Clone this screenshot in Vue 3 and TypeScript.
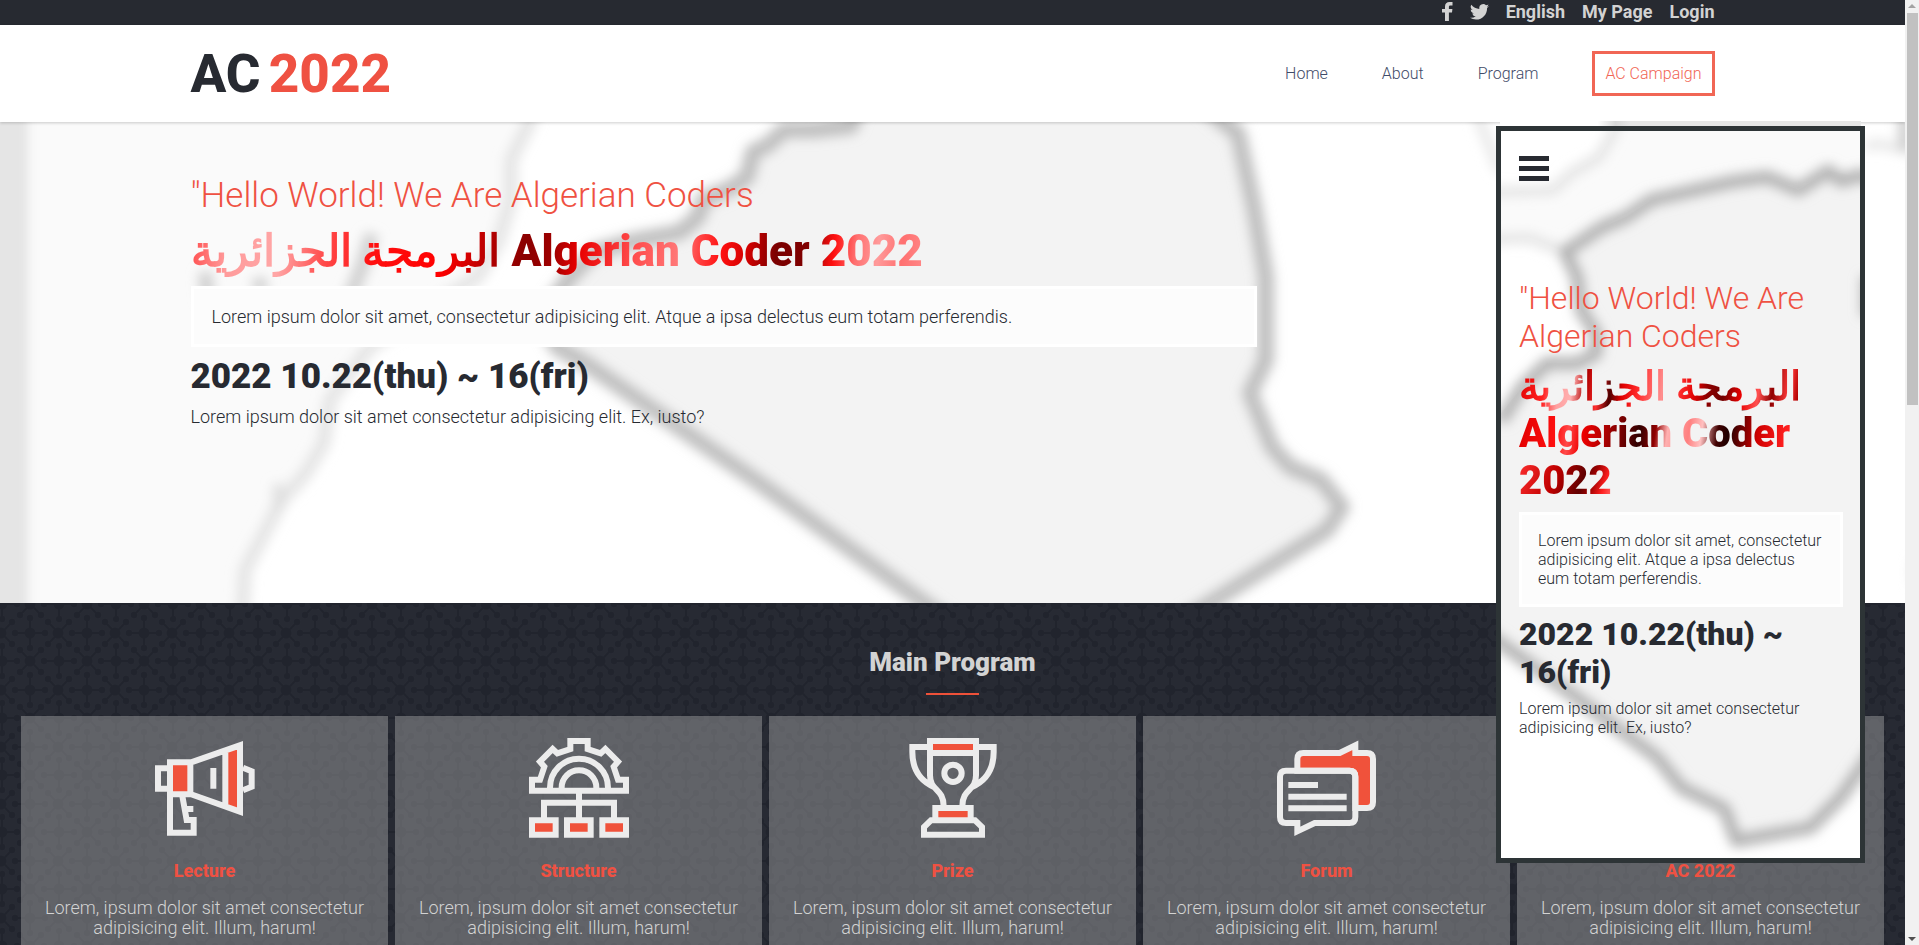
<script setup lang="ts">
interface Program {
  icon: string
  title: string
}

const account: string[] = ['English', 'My Page', 'Login']
const menu: string[] = ['Home', 'About', 'Program']
const programs: Program[] = [
  { icon: 'lecture', title: 'Lecture' },
  { icon: 'structure', title: 'Structure' },
  { icon: 'prize', title: 'Prize' },
  { icon: 'forum', title: 'Forum' },
  { icon: 'none', title: 'AC 2022' },
]
</script>

<template>
  <div class="window">
    <div class="page">
      <div class="topbar">
        <a href="#" aria-label="Facebook">
          <svg class="facebook" viewBox="0 0 11 19"><path d="M3 19V10.500H0V7H3V4.500C3 1.500 4.700 0 7.500 0H10.500V3.400H8.500C7.200 3.400 6.900 4 6.900 5V7H10.400L10 10.500H6.900V19Z" /></svg>
        </a>
        <a href="#" aria-label="Twitter">
          <svg class="twitter" viewBox="0 0 24 20"><path d="M24 2.370a9.600 9.600 0 0 1-2.830.780A4.960 4.960 0 0 0 23.340.400a9.900 9.900 0 0 1-3.130 1.200 4.920 4.920 0 0 0-8.380 4.490A13.960 13.960 0 0 1 1.670.930a4.930 4.930 0 0 0 1.520 6.570 4.900 4.900 0 0 1-2.230-.610 4.930 4.930 0 0 0 3.950 4.880 4.900 4.900 0 0 1-2.220.090 4.930 4.930 0 0 0 4.600 3.420A9.870 9.870 0 0 1 0 17.320a13.940 13.940 0 0 0 7.550 2.210c9.140 0 14.300-7.720 14-14.650A10 10 0 0 0 24 2.370Z" /></svg>
        </a>
        <a v-for="item in account" :key="item" href="#">{{ item }}</a>
      </div>

      <header class="header">
        <a class="logo" href="#">AC <span>2022</span></a>
        <nav class="menu">
          <a v-for="item in menu" :key="item" href="#">{{ item }}</a>
          <a class="campaign" href="#">AC Campaign</a>
        </nav>
      </header>

      <main>
        <section class="hero">
          <svg class="map" viewBox="0 0 1905 481" preserveAspectRatio="xMinYMin slice" aria-hidden="true">
            <defs>
              <filter id="soft" x="-10%" y="-10%" width="120%" height="120%"><feGaussianBlur stdDeviation="6" /></filter>
              <filter id="edge" x="-100%" y="-10%" width="300%" height="120%"><feGaussianBlur stdDeviation="5" /></filter>
            </defs>
            <path fill="#fafafa" d="M0 0H530L511 38 511 78 499 118 478 155 370 225 330 278 324 321 306 351 282 378 245 448 242 481H0Z" />
            <path fill="#f3f3f3" d="M851 0L784 8 768 23 753 30 747 55 729 67 704 77 698 95 680 110 637 118 594 130 570 155 540 195 557 225 588 243 755 358 925 481H1205L1327 408 1342 385 1321 358 1290 345 1272 325 1250 271 1266 238 1266 155 1254 85 1238 11 1223 0Z" />
            <g fill="none" filter="url(#soft)" stroke-linejoin="round">
              <path stroke="#e4e4e4" stroke-width="13" d="M532-20L530 0 511 38 511 78 499 118 478 155 370 225 330 278 324 321 306 351 282 378 245 448 242 500" />
              <path stroke="#d0d0d0" stroke-width="14" d="M372 112L362 145 348 180M205 150L208 180M258 156L262 170" />
              <path stroke="#dedede" stroke-width="10" d="M278 362L278 388" />
              <path stroke="#bfbfbf" stroke-width="16" d="M860-20L851 4 814 8 784 8 768 23 753 30 747 55 729 67 704 77 698 95 680 110 637 118 594 130 570 155 540 195 557 225 588 243 755 358 950 500M1200-20L1223 0 1238 11 1254 85 1266 155 1266 238 1250 271 1272 325 1290 345 1321 358 1342 385 1327 408 1180 500" />
              <path stroke="#e8e8e8" stroke-width="10" d="M1474-20L1480 0 1488 20 1500 50M1865 24L1880 22 1915 30M1915 438V462" />
              <path stroke="#d0d0d0" stroke-width="14" d="M1905-10V28" />
            </g>
            <path fill="#e5e5e5" filter="url(#edge)" d="M-20-20H28V520H-20Z" />
          </svg>
          <div class="intro">
            <p class="hello">"Hello World! We Are Algerian Coders</p>
            <h1 class="headline">البرمجة الجزائرية Algerian Coder 2022</h1>
            <p class="note">Lorem ipsum dolor sit amet, consectetur adipisicing elit. Atque a ipsa delectus eum totam perferendis.</p>
            <h2 class="date">2022 10.22(thu) ~ 16(fri)</h2>
            <p class="place">Lorem ipsum dolor sit amet consectetur adipisicing elit. Ex, iusto?</p>
          </div>
        </section>

        <section class="programs">
          <svg class="pattern" aria-hidden="true">
            <defs>
              <pattern id="nodes" x="1" y="1" width="57" height="57" patternUnits="userSpaceOnUse">
                <g fill="#21242d" stroke="#21242d" stroke-width="2">
                  <g id="plus">
                    <path d="M14 29H44M29 14V44" />
                    <circle cx="29" cy="29" r="4.500" /><circle cx="14" cy="29" r="2.200" /><circle cx="44" cy="29" r="2.200" /><circle cx="29" cy="14" r="2.200" /><circle cx="29" cy="44" r="2.200" />
                  </g>
                  <use href="#plus" x="-28" y="28" /><use href="#plus" x="29" y="28" /><use href="#plus" x="-28" y="-29" /><use href="#plus" x="29" y="-29" />
                  <g id="cross">
                    <path d="M-10 18L11 40M11 18L-10 40" />
                    <circle cx="0" cy="29" r="4.500" /><circle cx="-10" cy="18" r="2.200" /><circle cx="11" cy="18" r="2.200" /><circle cx="-10" cy="40" r="2.200" /><circle cx="11" cy="40" r="2.200" />
                  </g>
                  <use href="#cross" x="57" /><use href="#cross" x="29" y="28" /><use href="#cross" x="29" y="-29" />
                </g>
              </pattern>
            </defs>
            <rect width="100%" height="100%" fill="url(#nodes)" />
          </svg>
          <h2 class="title">Main Program</h2>
          <div class="cards">
            <article v-for="item in programs" :key="item.title" class="card">
              <svg class="icon" viewBox="0 0 300 300" aria-hidden="true">
                <template v-if="item.icon === 'lecture'">
                  <path class="red" d="M45 73H106V169H45ZM211 37L255 22V220L211 205Z" />
                  <path d="M45 91H9V152H45M45 73H106V169H45ZM106 74L255 22V221L106 168M211 38V204M175 90V152M264 89L290 100V146L264 157M45 169V284H116V246H95L82 174M90 213H115" />
                </template>
                <template v-else-if="item.icon === 'structure'">
                  <path class="red" d="M9 247H80V290H9ZM114 247H185V290H114ZM220 247H291V290H220Z" />
                  <path d="M9 158V125H33L46 86 33 71 71 33 85 46 124 33V9H176V33L215 46 229 33 267 71 254 86 267 125H291V158ZM63 158V149A87 87 0 0 1 237 149V158M98 158V149A52 52 0 0 1 202 149V158M150 158V247M45 247V194H255V247M9 247H80V290H9ZM114 247H185V290H114ZM220 247H291V290H220Z" />
                </template>
                <template v-else-if="item.icon === 'prize'">
                  <path class="red" d="M81 9H219V45H81ZM97 210H203V247H97Z" />
                  <path d="M81 9H219V45H81ZM81 27H28V42C28 95 52 130 97 149M219 27H272V42C272 95 248 130 203 149M81 45V112C81 160 122 150 122 205M219 45V112C219 160 178 150 178 205M97 210H203V247H97ZM63 290V267L84 247H216L237 267V290Z" />
                  <circle cx="150" cy="106" r="26" />
                </template>
                <template v-else-if="item.icon === 'forum'">
                  <path class="red back" d="M61 98V63Q61 45 79 45H188L235 22V45H270Q288 45 288 63V192Q288 210 270 210H235V116Q235 98 217 98Z" />
                  <path d="M27 98H217Q235 98 235 116V237Q235 255 217 255H113L61 280V255H27Q9 255 9 237V116Q9 98 27 98ZM34 141H123M34 176H209M34 211H209" />
                </template>
              </svg>
              <h3>{{ item.title }}</h3>
              <p>Lorem, ipsum dolor sit amet consectetur adipisicing elit. Illum, harum!</p>
            </article>
          </div>
        </section>
      </main>

      <aside class="phone">
        <svg class="map" viewBox="0 0 359 726" preserveAspectRatio="xMinYMin slice" aria-hidden="true">
          <path fill="#fafafa" d="M113 0L98 26 70 42 52 59 0 61V109L28 106 64 121 101 96 150 69 359 46V0Z" />
          <path fill="#f3f3f3" d="M359 46L327 40 297 59 266 46 229 51 180 62 150 69 125 86 101 96 64 121 76 146 80 179 95 202 95 222 76 232 46 232 21 256 0 282V512L70 562 156 626 180 656 223 677 235 709 309 696 339 666 359 640Z" />
          <g fill="none" filter="url(#soft)" stroke-linejoin="round">
            <path stroke="#e4e4e4" stroke-width="10" d="M118-15L113 0 98 26 70 42 52 59-20 61M-20 109L28 107 64 121" />
            <path stroke="#b4b4b4" stroke-width="13" d="M375 48L359 44 340 50 327 40 297 59 266 46 229 51 180 62 150 69 125 86 101 96 64 121 76 146 80 179 95 202 95 222 76 232 46 232 21 256 0 290M-20 498L0 512 70 562 156 626 180 656 223 677 235 709 309 696 339 666 375 615M366 145V185" />
          </g>
        </svg>
        <div class="screen">
          <button class="burger" type="button" aria-label="Menu"><i></i><i></i><i></i></button>
          <p class="hello">"Hello World! We Are Algerian Coders</p>
          <h2 class="headline">البرمجة الجزائرية Algerian Coder 2022</h2>
          <p class="note">Lorem ipsum dolor sit amet, consectetur adipisicing elit. Atque a ipsa delectus eum totam perferendis.</p>
          <h2 class="date">2022 10.22(thu) ~ 16(fri)</h2>
          <p class="place">Lorem ipsum dolor sit amet consectetur adipisicing elit. Ex, iusto?</p>
        </div>
      </aside>
    </div>

    <div class="scroll" aria-hidden="true">
      <svg viewBox="0 0 14 13"><path fill="#a3a3a3" d="M3 8L7 4 11 8Z" /></svg>
      <div class="thumb"></div>
      <svg viewBox="0 0 14 13"><path fill="#505050" d="M3 5L7 9 11 5Z" /></svg>
    </div>
  </div>
</template>

<style>
body {
  margin: 0;
  overflow: hidden;
}
</style>

<style scoped>
.window {
  display: flex;
  height: 100vh;
  overflow: hidden;
  font-family: Roboto, sans-serif;
  font-weight: 300;
  color: #272a31;
}
.window * {
  box-sizing: border-box;
}
a {
  color: inherit;
  text-decoration: none;
}
p,
h1,
h2,
h3 {
  margin: 0;
}
.page {
  position: relative;
  flex: 1;
  min-width: 0;
  display: flex;
  flex-direction: column;
  overflow: hidden;
}
.topbar {
  display: flex;
  flex-shrink: 0;
  justify-content: flex-end;
  align-items: center;
  gap: 17px;
  height: 25px;
  padding: 0 10% 2px;
  background: #272a31;
  color: #d3d3d3;
  font-size: 18px;
  line-height: 21px;
  font-weight: 700;
}
.topbar svg {
  display: block;
  fill: #d3d3d3;
}
.facebook {
  width: 11px;
  height: 19px;
}
.twitter {
  width: 19px;
  height: 16px;
}
.header {
  position: relative;
  z-index: 1;
  display: flex;
  flex-shrink: 0;
  justify-content: space-between;
  align-items: center;
  height: 97px;
  padding: 0 10%;
  background: #fff;
  box-shadow: 0 1px 3px rgba(0, 0, 0, 0.2);
}
.logo {
  font-size: 53px;
  line-height: 62px;
  font-weight: 800;
}
.logo span {
  margin-left: -5px;
  color: #ef5142;
}
.menu {
  display: flex;
  align-items: center;
  gap: 54px;
  font-size: 16px;
  line-height: 19px;
  color: #3f4b68;
}
.campaign {
  padding: 10px;
  border: 3px solid #f16655;
  color: #f16655;
}
.hero {
  position: relative;
  height: 481px;
  padding: 53px 10% 0;
  background: #fff;
  overflow: hidden;
}
.map {
  position: absolute;
  top: 0;
  left: 0;
  width: 100%;
  height: 100%;
}
.intro {
  position: relative;
  display: flex;
  flex-direction: column;
  align-items: flex-start;
  gap: 9px;
}
.hello {
  font-size: 35px;
  line-height: 41px;
  color: #ef5142;
}
.headline {
  font-size: 44px;
  line-height: 52px;
  font-weight: 900;
  color: transparent;
  -webkit-background-clip: text;
  background-clip: text;
  background-image: linear-gradient(96deg, #ff4a4a, #ff9b9b 38px, #ffa6a6 90px, #ff4a4a 136px, #ff1010 184px, #ff0000 252px, #b00000 302px, #8a0000 335px, #a00000 364px, #e80000 388px, #ff4a4a 441px, #ff7a7a 490px, #ff4040 509px, #ff1010 530px, #d00000 557px, #7a0000 585px, #800000 615px, #ff1010 642px, #ff7070 664px, #ff9a9a 686px, #ff7070 710px, #ff8a8a 735px);
}
.note {
  width: 70%;
  padding: 17px 18px;
  border: 3px solid #fff;
  background: #fcfcfc;
  font-size: 18px;
  line-height: 21px;
}
.date {
  font-size: 35px;
  line-height: 41px;
  font-weight: 900;
}
.place {
  font-size: 18px;
  line-height: 21px;
}
.programs {
  position: relative;
  padding: 44px 21px 22px;
  background: #272a33;
}
.pattern {
  position: absolute;
  top: 0;
  left: 0;
  width: 100%;
  height: 100%;
}
.title {
  position: relative;
  display: flex;
  flex-direction: column;
  align-items: center;
  gap: 15px;
  font-size: 26px;
  line-height: 31px;
  font-weight: 900;
  color: #d3d3d3;
}
.title::after {
  content: "";
  width: 53px;
  height: 2px;
  background: #ef5139;
}
.cards {
  position: relative;
  display: grid;
  grid-template-columns: repeat(5, 1fr);
  gap: 7px;
  margin-top: 21px;
}
.card {
  display: flex;
  flex-direction: column;
  align-items: center;
  padding: 22px 22px 32px;
  background: rgba(156, 156, 158, 0.5);
  text-align: center;
}
.icon {
  width: 100px;
  height: 100px;
  fill: none;
  stroke: #ececec;
  stroke-width: 18;
}
.icon .red {
  fill: #f0523b;
  stroke: none;
}
.icon .back {
  stroke: #ececec;
}
.card h3 {
  margin: 22px 0 17px;
  font-size: 18px;
  line-height: 21px;
  font-weight: 800;
  color: #ef5142;
}
.card p {
  font-size: 18px;
  line-height: 20px;
  color: #d3d3d3;
}
.phone {
  position: absolute;
  z-index: 2;
  top: 126px;
  right: 40px;
  width: 369px;
  border: 5px solid #2d3436;
  background: #fff;
}
.phone::before {
  content: "";
  position: absolute;
  top: -10px;
  left: -1px;
  right: -1px;
  height: 5px;
  background: linear-gradient(90deg, #fff 27%, #d8d8d8 32%, #e6e6e6 36%);
}
.screen {
  position: relative;
  display: flex;
  flex-direction: column;
  gap: 8px;
  min-height: 727px;
  padding: 25px 17px 0 18px;
}
.burger {
  display: flex;
  flex-direction: column;
  gap: 5px;
  width: 30px;
  margin-bottom: 90px;
  padding: 0;
  border: 0;
  background: none;
}
.burger i {
  height: 5px;
  background: #272a31;
}
.screen .hello,
.screen .date {
  font-size: 32px;
  line-height: 38px;
}
.screen .headline {
  font-size: 40px;
  line-height: 47px;
  background-image:
    linear-gradient(98deg, #e00000, #ff2020 28px, #ffa0a0 43px, #ffb0b0 56px, #b00000 70px, #ff3030 82px, #500000 94px, #e00000 106px, #ff2a2a 121px, #ff9090 146px, #ff3030 162px, #e00000 178px, #900000 190px, #700000 206px, #e80000 224px, #ff5050 241px, #900000 255px, #ff3a3a 271px, #b00000 281px),
    linear-gradient(98deg, #e00000, #ff1010 40px, #ff4a4a 52px, #f00000 66px, #b00000 88px, #700000 106px, #300000 122px, #900000 138px, #ffb0b0 150px, #ff8080 171px, #ffc0c0 184px, #400000 200px, #200000 210px, #700000 224px, #d00000 240px, #ff2020 268px),
    linear-gradient(110deg, #ff3030, #c00000 40px, #600000 68px, #a00000 78px, #ff2020 90px, #ff9090 106px);
  background-size: 100% 47px;
  background-position: 0 0, 0 47px, 0 94px;
  background-repeat: no-repeat;
}
.screen .note {
  width: 100%;
  padding: 16px;
  font-size: 16px;
  line-height: 19px;
}
.screen .place {
  font-size: 16px;
  line-height: 19px;
}
.scroll {
  display: flex;
  flex-direction: column;
  align-items: center;
  width: 14px;
  background: #f1f1f1;
}
.scroll svg {
  flex-shrink: 0;
  width: 14px;
  height: 13px;
}
.thumb {
  width: 11px;
  height: 392px;
  flex-shrink: 0;
  margin-bottom: auto;
  background: #c1c1c1;
}
</style>
